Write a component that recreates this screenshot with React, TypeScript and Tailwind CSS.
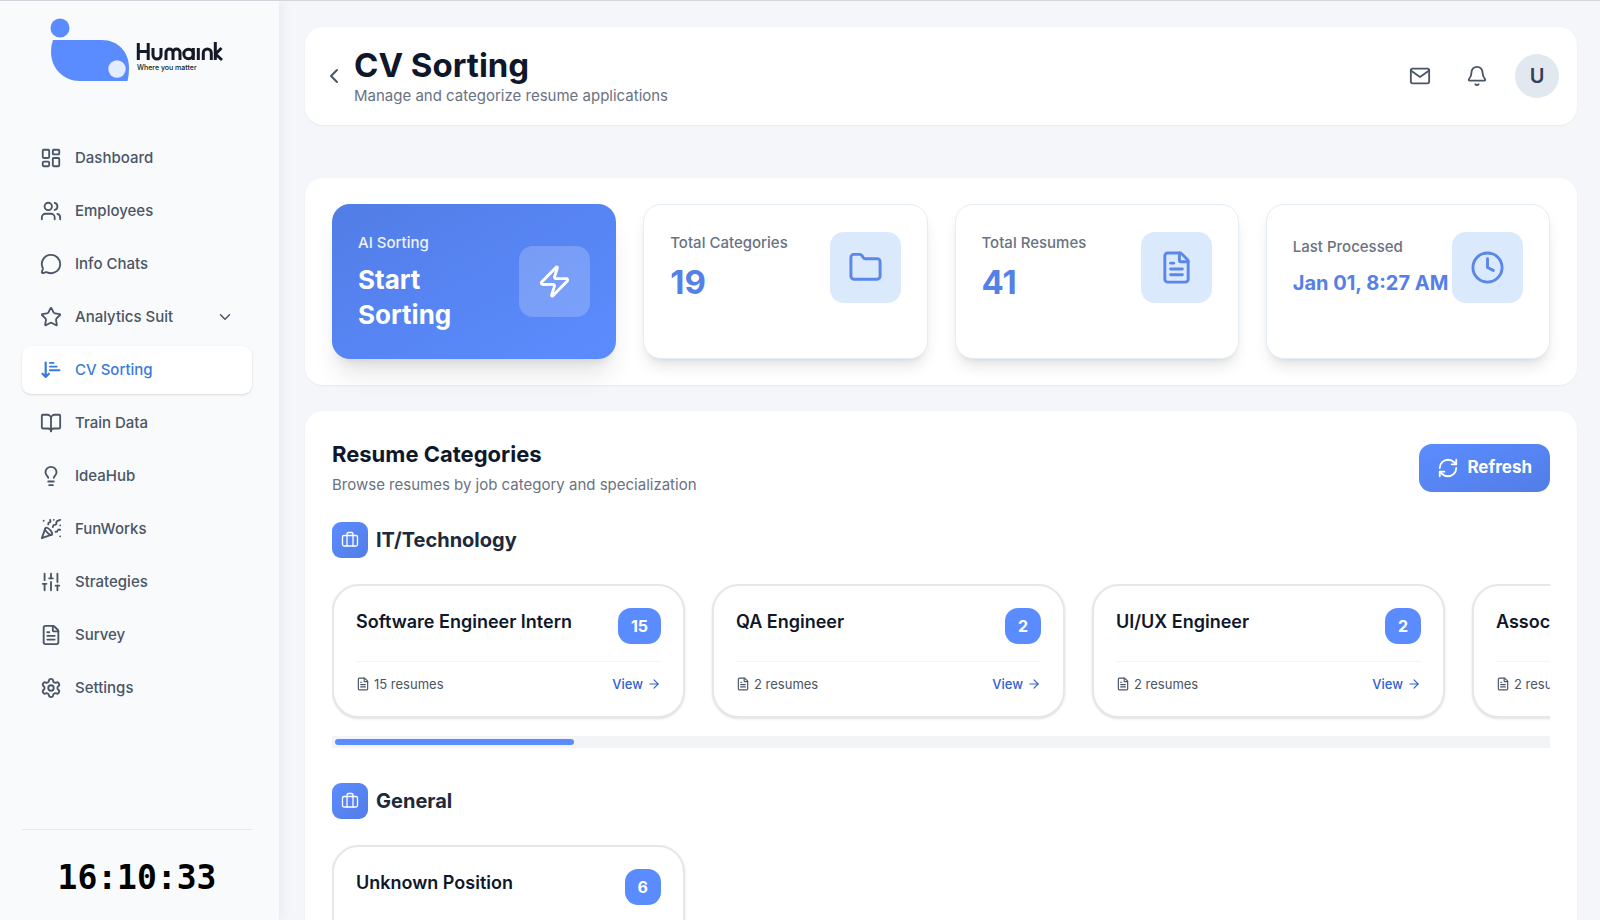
import React from 'react';
import {
  ArrowRight,
  Bell,
  BookOpen,
  Briefcase,
  ChevronDown,
  ChevronLeft,
  Clock,
  FileText,
  Folder,
  LayoutDashboard,
  Lightbulb,
  MessageCircle,
  PartyPopper,
  RefreshCw,
  Settings,
  SlidersVertical,
  Star,
  Users,
  Zap,
} from 'lucide-react';
import { FiMail } from 'react-icons/fi';

interface Category {
  title: string;
  count: number;
}

interface Group {
  name: string;
  scrollable: boolean;
  categories: Category[];
}

const groups: Group[] = [
  {
    name: 'IT/Technology',
    scrollable: true,
    categories: [
      { title: 'Software Engineer Intern', count: 15 },
      { title: 'QA Engineer', count: 2 },
      { title: 'UI/UX Engineer', count: 2 },
      { title: 'Associate Engineer', count: 2 },
    ],
  },
  {
    name: 'General',
    scrollable: false,
    categories: [{ title: 'Unknown Position', count: 6 }],
  },
];

function SortIcon({ size = 22 }: { size?: number }) {
  return (
    <svg width={size} height={size} viewBox="0 0 24 24" fill="none" stroke="currentColor" strokeLinecap="round" strokeLinejoin="round">
      <path strokeWidth="2.4" d="M6.200 4v15.500M2.700 16l3.500 3.500L9.700 16" />
      <path strokeWidth="2" d="M10.800 4.300h4M10.800 8.300h7.500M10.800 12.300h10.500" />
    </svg>
  );
}

const navItems = [
  { label: 'Dashboard', icon: LayoutDashboard },
  { label: 'Employees', icon: Users },
  { label: 'Info Chats', icon: MessageCircle },
  { label: 'Analytics Suit', icon: Star, expandable: true },
  { label: 'CV Sorting', icon: SortIcon, active: true },
  { label: 'Train Data', icon: BookOpen },
  { label: 'IdeaHub', icon: Lightbulb },
  { label: 'FunWorks', icon: PartyPopper },
  { label: 'Strategies', icon: SlidersVertical },
  { label: 'Survey', icon: FileText },
  { label: 'Settings', icon: Settings },
];

function Logo() {
  return (
    <a href="#" aria-label="Humaink" className="mt-[17px] ml-[50px] block">
      <svg width="174" height="66" viewBox="0 0 174 66">
        <circle cx="10" cy="10" r="9.500" fill="#5b8cff" />
        <path d="M3 22H52C68 22 79 34 79 50Q79 57 77.500 63H30C13 63 1 50 1 34Q1 27 3 22Z" fill="#5b8cff" />
        <circle cx="67" cy="51" r="8.700" fill="#e3edff" />
        <g fill="none" stroke="#141a26" strokeWidth="3" strokeLinejoin="round">
          <path d="M88.300 25v17M98.200 25v17M88.300 33.500h9.900" />
          <path d="M103 30v7a4 4 0 0 0 8 0v-7" />
          <path d="M116 42v-7.500a3.500 3.500 0 0 1 7 0V42M123 42v-7.500a3.500 3.500 0 0 1 7 0V42" />
          <circle cx="138.500" cy="36" r="4.700" />
          <path d="M143.300 30v12M148.300 30v12" />
          <path d="M153.300 42v-7a4 4 0 0 1 8 0v7" />
          <path d="M165.300 24v18M171.500 30l-6 6 6.500 6" />
        </g>
        <text x="87" y="52" fontSize="7" fontWeight="500" fill="#141a26">
          Where you matter
        </text>
      </svg>
    </a>
  );
}

function Sidebar() {
  return (
    <aside className="z-10 flex w-[279px] shrink-0 flex-col bg-[#f9fafc] pb-5 shadow-[2px_0_12px_rgba(15,23,42,0.06)]">
      <Logo />
      <nav className="mt-[50px] flex flex-1 flex-col gap-[5px] px-[22px]">
        {navItems.map(({ label, icon: Icon, active, expandable }) => (
          <button
            key={label}
            className={
              active
                ? 'flex h-12 w-[230px] items-center gap-[13px] rounded-[9px] bg-white px-[18px] text-[15px] font-medium text-[#3b7add] shadow-sm'
                : 'flex h-12 w-[230px] items-center gap-[13px] rounded-[9px] px-[18px] text-[15px] font-medium text-gray-600'
            }
          >
            <Icon size={22} />
            <span>{label}</span>
            {expandable && <ChevronDown size={18} className="ml-auto" />}
          </button>
        ))}
      </nav>
      <div className="ml-[22px] w-[230px] border-t border-gray-200 pt-[26px] text-center font-['DejaVu_Sans_Mono',monospace] text-[33px] leading-[44px] font-bold text-black">
        16:10:33
      </div>
    </aside>
  );
}

function Header() {
  return (
    <header className="flex h-[98px] shrink-0 items-center justify-between rounded-[18px] bg-white pr-[18px] pl-[17px] shadow-xs">
      <div className="flex items-center gap-2">
        <button aria-label="Back" className="text-gray-600">
          <ChevronLeft size={24} />
        </button>
        <div className="pt-[2px]">
          <h1 className="text-[33px] leading-[38px] font-bold text-[#0f172a]">CV Sorting</h1>
          <p className="text-[15px] leading-6 text-gray-500">Manage and categorize resume applications</p>
        </div>
      </div>
      <div className="flex items-center gap-[27px]">
        <div className="flex items-center gap-[35px] text-gray-600">
          <button aria-label="Messages">
            <FiMail size={22} />
          </button>
          <button aria-label="Notifications">
            <Bell size={22} />
          </button>
        </div>
        <button className="size-11 rounded-full bg-[#e2e8f0] text-xl font-semibold text-slate-700">U</button>
      </div>
    </header>
  );
}

interface StatCardProps {
  label: string;
  value: string;
  icon: React.ElementType;
  small?: boolean;
}

function StatCard({ label, value, icon: Icon, small }: StatCardProps) {
  return (
    <div className="flex items-start justify-between rounded-[18px] border border-[#e3edf5] bg-white px-[26px] pt-[27px] pb-[26px] shadow-lg">
      <div className={small ? 'pt-1' : ''}>
        <p className="text-[15px] leading-[22px] font-medium whitespace-nowrap text-gray-500">{label}</p>
        <p
          className={
            small
              ? 'mt-3 text-xl leading-[26px] font-bold whitespace-nowrap text-[#5580e8]'
              : 'mt-2 text-[33px] leading-10 font-bold text-[#5580e8]'
          }
        >
          {value}
        </p>
      </div>
      <div className="flex size-[71px] shrink-0 items-center justify-center rounded-[14px] bg-[#daeafc] text-[#5b86ea]">
        <Icon size={35} />
      </div>
    </div>
  );
}

function Stats() {
  return (
    <section className="mt-[53px] grid shrink-0 grid-cols-4 gap-[27px] rounded-[18px] bg-white px-[27px] py-[26px] shadow-xs">
      <button className="flex h-[155px] items-center justify-between rounded-[18px] bg-linear-to-br from-[#527de6] to-[#5b8cff] px-[26px] text-left text-white shadow-xl">
        <div className="w-[130px]">
          <p className="text-[15px] leading-[22px] font-medium text-white/90">AI Sorting</p>
          <p className="mt-2 text-[26px] leading-[35px] font-bold">Start Sorting</p>
        </div>
        <div className="flex size-[71px] items-center justify-center rounded-[14px] bg-white/20">
          <Zap size={35} />
        </div>
      </button>
      <StatCard label="Total Categories" value="19" icon={Folder} />
      <StatCard label="Total Resumes" value="41" icon={FileText} />
      <StatCard label="Last Processed" value="Jan 01, 8:27 AM" icon={Clock} small />
    </section>
  );
}

function CategoryCard({ title, count }: Category) {
  return (
    <article className="h-[134px] w-[353px] shrink-0 rounded-[27px] border-2 border-gray-200 bg-white px-[22px] pt-[22px] shadow-sm">
      <div className="flex h-[54px] items-start justify-between border-b border-gray-100">
        <h4 className="text-lg leading-[27px] font-semibold whitespace-nowrap text-[#0f172a]">{title}</h4>
        <span className="rounded-[13px] bg-[#5b8cff] px-[13px] text-base leading-[36px] font-bold text-white">{count}</span>
      </div>
      <div className="mt-3 flex items-center justify-between text-[13px] leading-5">
        <span className="flex items-center gap-1 text-gray-600">
          <FileText size={14} />
          {count} resumes
        </span>
        <button className="flex items-center gap-1 font-medium text-[#2f62d0]">
          View
          <ArrowRight size={14} />
        </button>
      </div>
    </article>
  );
}

function CategoryGroup({ group }: { group: Group }) {
  return (
    <div className="mb-[35px]">
      <div className="flex items-center gap-2">
        <div className="flex size-9 items-center justify-center rounded-[9px] bg-linear-to-br from-[#5b8cff] to-[#527de6] text-white">
          <Briefcase size={18} strokeWidth={1.75} />
        </div>
        <h3 className="text-xl leading-9 font-bold text-gray-800">{group.name}</h3>
      </div>
      <div className="mt-[26px] flex gap-[27px] overflow-x-auto pb-[18px] [scrollbar-width:none]">
        {group.categories.map((category) => (
          <CategoryCard key={category.title} {...category} />
        ))}
      </div>
      {group.scrollable && (
        <div className="h-3 bg-gray-100 p-[3px]">
          <div className="h-[6px] w-[239px] rounded-full bg-[#5b8cff]" />
        </div>
      )}
    </div>
  );
}

export default function App() {
  return (
    <div className="flex h-screen overflow-hidden border-t border-gray-300 bg-[#f4f6fa] font-['Inter',sans-serif]">
      <Sidebar />
      <main className="flex min-w-0 flex-1 flex-col overflow-hidden pt-[26px] pr-[23px] pl-[26px]">
        <Header />
        <Stats />
        <section className="mt-[26px] shrink-0 rounded-[18px] bg-white px-[27px] pt-[27px] pb-[26px] shadow-xs">
          <div className="mb-[25px] flex items-center justify-between">
            <div>
              <h2 className="text-[22px] leading-8 font-bold text-[#0f172a]">Resume Categories</h2>
              <p className="mt-[3px] text-[15px] leading-6 text-gray-500">Browse resumes by job category and specialization</p>
            </div>
            <button className="flex h-12 items-center gap-2 rounded-[13px] bg-linear-to-br from-[#5b8cff] to-[#527de6] px-[18px] text-[17px] font-bold text-white">
              <RefreshCw size={22} />
              Refresh
            </button>
          </div>
          {groups.map((group) => (
            <CategoryGroup key={group.name} group={group} />
          ))}
        </section>
      </main>
    </div>
  );
}
